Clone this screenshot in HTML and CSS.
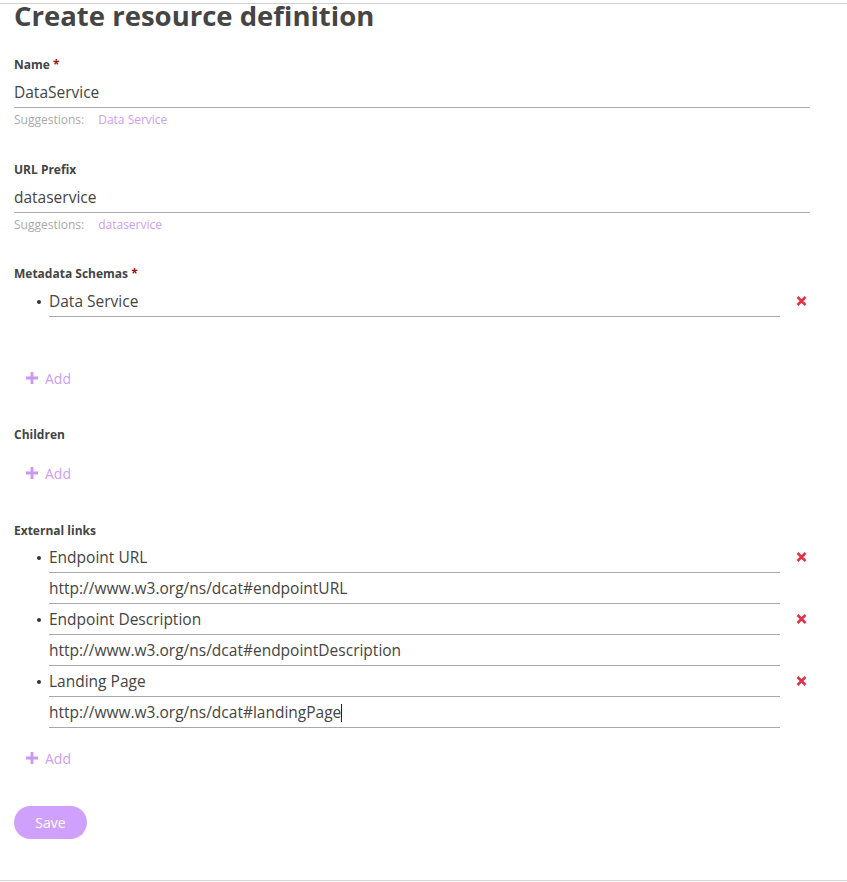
FILE: index.html
```html
<!DOCTYPE html>
<html lang="en">
<head>
<meta charset="utf-8">
<title>Create resource definition</title>
<link rel="stylesheet" href="styles.css">
</head>
<body>
<div class="topbar"></div>
<main class="form">
  <h1 class="title">Create resource definition</h1>

  <section class="field field-name">
    <div class="label">Name <span class="req">*</span></div>
    <div class="input">DataService</div>
    <div class="suggest"><span class="suggest-k">Suggestions:</span><span class="suggest-v">Data Service</span></div>
  </section>

  <section class="field field-url">
    <div class="label">URL Prefix</div>
    <div class="input">dataservice</div>
    <div class="suggest"><span class="suggest-k">Suggestions:</span><span class="suggest-v">dataservice</span></div>
  </section>

  <section class="field field-meta">
    <div class="label">Metadata Schemas <span class="req">*</span></div>
    <ul class="list">
      <li class="item">
        <span class="bullet"></span>
        <div class="inputs"><div class="input">Data Service</div></div>
        <span class="remove"><svg width="11" height="10" viewBox="0 0 11 10"><path d="M1.5 1L9.5 9M9.5 1L1.5 9" stroke="#e0334a" stroke-width="2.6"/></svg></span>
      </li>
    </ul>
    <button class="add add-spaced"><svg width="12" height="12" viewBox="0 0 12 12"><path d="M6 0V12M0 6H12" stroke="#c998f5" stroke-width="2.8"/></svg><span>Add</span></button>
  </section>

  <section class="field field-children">
    <div class="label">Children</div>
    <button class="add add-children"><svg width="12" height="12" viewBox="0 0 12 12"><path d="M6 0V12M0 6H12" stroke="#c998f5" stroke-width="2.8"/></svg><span>Add</span></button>
  </section>

  <section class="field field-links">
    <div class="label">External links</div>
    <ul class="list list-links">
      <li class="item">
        <span class="bullet"></span>
        <div class="inputs">
          <div class="input">Endpoint URL</div>
          <div class="input">http://www.w3.org/ns/dcat#endpointURL</div>
        </div>
        <span class="remove"><svg width="11" height="10" viewBox="0 0 11 10"><path d="M1.5 1L9.5 9M9.5 1L1.5 9" stroke="#e0334a" stroke-width="2.6"/></svg></span>
      </li>
      <li class="item">
        <span class="bullet"></span>
        <div class="inputs">
          <div class="input">Endpoint Description</div>
          <div class="input">http://www.w3.org/ns/dcat#endpointDescription</div>
        </div>
        <span class="remove"><svg width="11" height="10" viewBox="0 0 11 10"><path d="M1.5 1L9.5 9M9.5 1L1.5 9" stroke="#e0334a" stroke-width="2.6"/></svg></span>
      </li>
      <li class="item">
        <span class="bullet"></span>
        <div class="inputs">
          <div class="input">Landing Page</div>
          <div class="input">http://www.w3.org/ns/dcat#landingPage<span class="caret"></span></div>
        </div>
        <span class="remove"><svg width="11" height="10" viewBox="0 0 11 10"><path d="M1.5 1L9.5 9M9.5 1L1.5 9" stroke="#e0334a" stroke-width="2.6"/></svg></span>
      </li>
    </ul>
    <button class="add add-links"><svg width="12" height="12" viewBox="0 0 12 12"><path d="M6 0V12M0 6H12" stroke="#c998f5" stroke-width="2.8"/></svg><span>Add</span></button>
  </section>

  <button class="save">Save</button>
</main>
<div class="bottomrule"></div>
</body>
</html>
```

FILE: styles.css
```css
html, body {
  margin: 0;
  padding: 0;
  background: #fff;
}
body {
  font-family: "Open Sans", "Noto Sans", sans-serif;
  color: #444;
}
.topbar {
  height: 3px;
  border-bottom: 1px solid #cfcfcf;
}
.form {
  width: 808px;
  margin-left: 14px;
}
.title {
  margin: 0;
  font-size: 27.5px;
  line-height: 24px;
  font-weight: 700;
  color: #454545;
}
.field-name {
  margin-top: 29px;
}
.field-url {
  margin-top: 34px;
}
.field-meta {
  margin-top: 33px;
}
.field-children {
  margin-top: 34px;
}
.field-links {
  margin-top: 35px;
}
.label {
  font-size: 12px;
  line-height: 16px;
  font-weight: 700;
  color: #444;
}
.req {
  color: #a01010;
}
.input {
  font-size: 15.5px;
  line-height: 30px;
  height: 30px;
  border-bottom: 1px solid #a8a8a8;
  color: #444;
  white-space: nowrap;
}
.field > .input {
  width: 796px;
  margin-top: 4px;
}
.caret {
  display: inline-block;
  width: 1px;
  height: 18px;
  background: #222;
  vertical-align: -4px;
}
.suggest {
  margin-top: 4px;
  font-size: 12px;
  line-height: 16px;
  color: #aaa;
}
.suggest-v {
  margin-left: 14px;
  color: #cc9ef5;
}
.list {
  list-style: none;
  margin: 4px 0 0;
  padding: 0;
}
.list-links {
  margin-top: 3px;
}
.item {
  display: grid;
  grid-template-columns: 35px 731px 42px;
  align-items: start;
}
.bullet {
  justify-self: end;
  margin-right: 8px;
  margin-top: 14px;
  width: 4px;
  height: 4px;
  border-radius: 50%;
  background: #333;
}
.inputs {
  display: flex;
  flex-direction: column;
}
.remove {
  display: flex;
  justify-content: center;
  padding-top: 10px;
}
.add {
  display: flex;
  align-items: center;
  gap: 7px;
  height: 30px;
  padding: 0 0 0 12px;
  border: 0;
  background: none;
  font-family: inherit;
  font-size: 14px;
  color: #cc9ef5;
  cursor: pointer;
}
.add-spaced {
  margin-top: 46px;
}
.add-children {
  margin-top: 15px;
}
.add-links {
  margin-top: 15px;
}
.save {
  display: block;
  margin-top: 33px;
  width: 73px;
  height: 33px;
  border: 0;
  border-radius: 17px;
  background: #d0a1fc;
  color: #fff;
  font-family: inherit;
  font-size: 14px;
  padding: 0;
}
.bottomrule {
  margin-top: 41px;
  border-top: 1px solid #d6d6d6;
  height: 1px;
}
```
